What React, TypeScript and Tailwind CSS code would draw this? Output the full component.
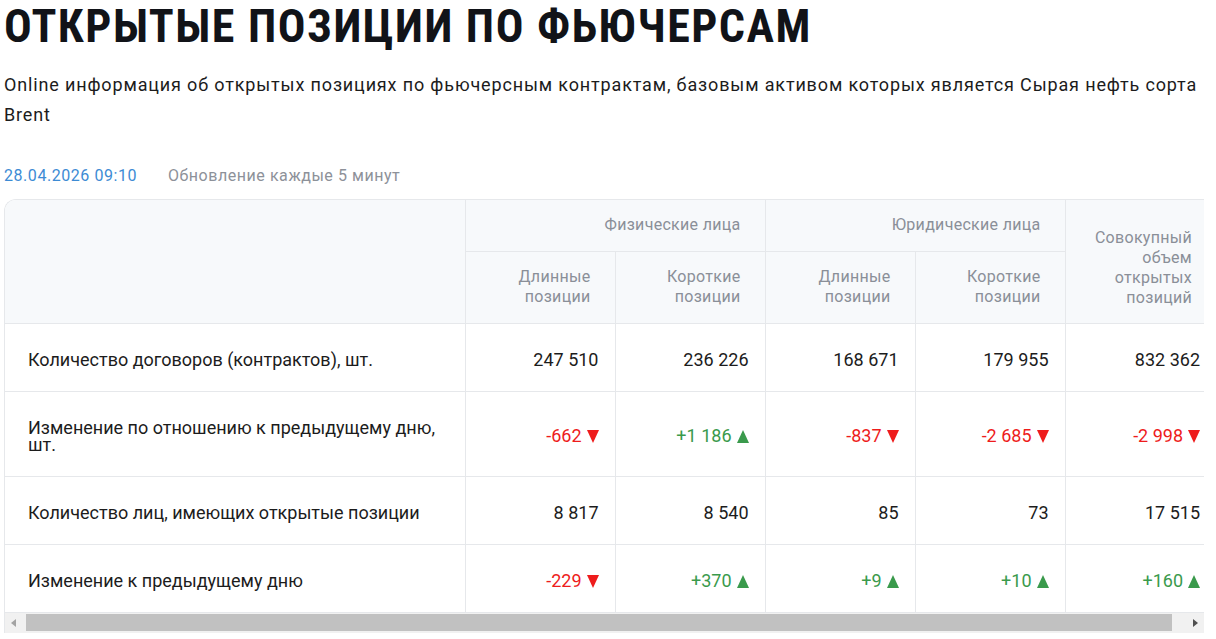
import React from "react";

type Cell = { v: string; d?: "up" | "down" };

const rows: { label: string; cells: Cell[] }[] = [
  {
    label: "Количество договоров (контрактов), шт.",
    cells: [{ v: "247 510" }, { v: "236 226" }, { v: "168 671" }, { v: "179 955" }, { v: "832 362" }],
  },
  {
    label: "Изменение по отношению к предыдущему дню, шт.",
    cells: [
      { v: "-662", d: "down" },
      { v: "+1 186", d: "up" },
      { v: "-837", d: "down" },
      { v: "-2 685", d: "down" },
      { v: "-2 998", d: "down" },
    ],
  },
  {
    label: "Количество лиц, имеющих открытые позиции",
    cells: [{ v: "8 817" }, { v: "8 540" }, { v: "85" }, { v: "73" }, { v: "17 515" }],
  },
  {
    label: "Изменение к предыдущему дню",
    cells: [
      { v: "-229", d: "down" },
      { v: "+370", d: "up" },
      { v: "+9", d: "up" },
      { v: "+10", d: "up" },
      { v: "+160", d: "up" },
    ],
  },
];

function Arrow({ d }: { d: "up" | "down" }) {
  return d === "up" ? (
    <svg width="12" height="13" viewBox="0 0 12 13" className="ml-[5px] inline-block align-[-1px]">
      <path d="M6 0 L12 13 L0 13 Z" fill="#3a9a4c" />
    </svg>
  ) : (
    <svg width="12" height="13" viewBox="0 0 12 13" className="ml-[5px] inline-block align-[-1px]">
      <path d="M0 0 L12 0 L6 13 Z" fill="#ee1c1c" />
    </svg>
  );
}

export default function App() {
  return (
    <div className="min-h-screen bg-white pl-[4px] pr-[12px]" style={{ fontFamily: "Roboto, 'Noto Sans', sans-serif" }}>
      {/* Title */}
      <h1
        className="text-[46px] leading-[52px] font-bold tracking-[1.5px] text-[#111318]"
        style={{ fontFamily: "'Liberation Sans Narrow', 'Roboto Condensed', Roboto, sans-serif" }}
      >
        ОТКРЫТЫЕ ПОЗИЦИИ ПО ФЬЮЧЕРСАМ
      </h1>

      {/* Description */}
      <p className="mt-[18px] text-[18px] leading-[30px] tracking-[0.85px] text-[#1c1c1c]">
        Online информация об открытых позициях по фьючерсным контрактам, базовым активом которых является Сырая нефть сорта Brent
      </p>

      {/* Update info */}
      <div className="mt-[36px] flex items-center gap-[31px] text-[16px] leading-[20px] tracking-[0.55px]">
        <span className="text-[#3d8bd4]">28.04.2026 09:10</span>
        <span className="text-[#8d9199]">Обновление каждые 5 минут</span>
      </div>

      {/* Table */}
      <div className="mt-[13px] w-[1200px] overflow-hidden rounded-tl-[12px] border-t border-l border-[#e6e8eb]">
        <div className="overflow-hidden">
          <table className="w-[1211px] table-fixed border-collapse">
            <colgroup>
              <col className="w-[460px]" />
              <col className="w-[150px]" />
              <col className="w-[150px]" />
              <col className="w-[150px]" />
              <col className="w-[150px]" />
              <col className="w-[151px]" />
            </colgroup>
            <thead className="bg-[#f7f9fb] text-[16px] leading-[20px] tracking-[0.3px] font-normal text-[#8a8f98]">
              <tr>
                <th rowSpan={2} className="border-r border-b border-[#e6e8eb]" />
                <th colSpan={2} className="h-[51px] border-r border-b border-[#e6e8eb] pr-[24px] text-right font-normal">
                  Физические лица
                </th>
                <th colSpan={2} className="border-r border-b border-[#e6e8eb] pr-[24px] text-right font-normal">
                  Юридические лица
                </th>
                <th rowSpan={2} className="border-b border-[#e6e8eb] pt-[14px] px-[24px] text-right font-normal">
                  Совокупный объем открытых позиций
                </th>
              </tr>
              <tr>
                {["Длинные позиции", "Короткие позиции", "Длинные позиции", "Короткие позиции"].map((t, i) => (
                  <th key={i} className="h-[72px] border-r border-b border-[#e6e8eb] px-[24px] text-right font-normal">
                    {t.split(" ")[0]}
                    <br />
                    {t.split(" ")[1]}
                  </th>
                ))}
              </tr>
            </thead>
            <tbody className="text-[18px] leading-[17px] text-[#1c1c1c]">
              {rows.map((r, ri) => (
                <tr key={ri} className="border-b border-[#e6e8eb]">
                  <td className="border-r border-[#e6e8eb] pt-[27px] pb-[23px] pl-[23px] pr-[20px]">{r.label}</td>
                  {r.cells.map((c, ci) => (
                    <td
                      key={ci}
                      className={
                        "pt-[27px] pb-[23px] pr-[16px] text-right whitespace-nowrap " +
                        (ci < 4 ? "border-r border-[#e6e8eb] " : "") +
                        (c.d === "up" ? "text-[#3a9a4c]" : c.d === "down" ? "text-[#ee1c1c]" : "")
                      }
                    >
                      {c.v}
                      {c.d && <Arrow d={c.d} />}
                    </td>
                  ))}
                </tr>
              ))}
            </tbody>
          </table>
        </div>

        {/* Horizontal scrollbar */}
        <div className="flex h-[20px] items-center bg-[#f1f1f1]">
          <div className="flex h-full w-[17px] items-center justify-center">
            <svg width="5" height="8" viewBox="0 0 5 8">
              <path d="M5 0 L0 4 L5 8 Z" fill="#a3a3a3" />
            </svg>
          </div>
          <div className="ml-[4px] mr-[15px] h-[17px] flex-1 bg-[#c1c1c1]" />
          <div className="flex h-full w-[17px] items-center justify-center">
            <svg width="5" height="8" viewBox="0 0 5 8">
              <path d="M0 0 L5 4 L0 8 Z" fill="#505050" />
            </svg>
          </div>
        </div>
      </div>
    </div>
  );
}
